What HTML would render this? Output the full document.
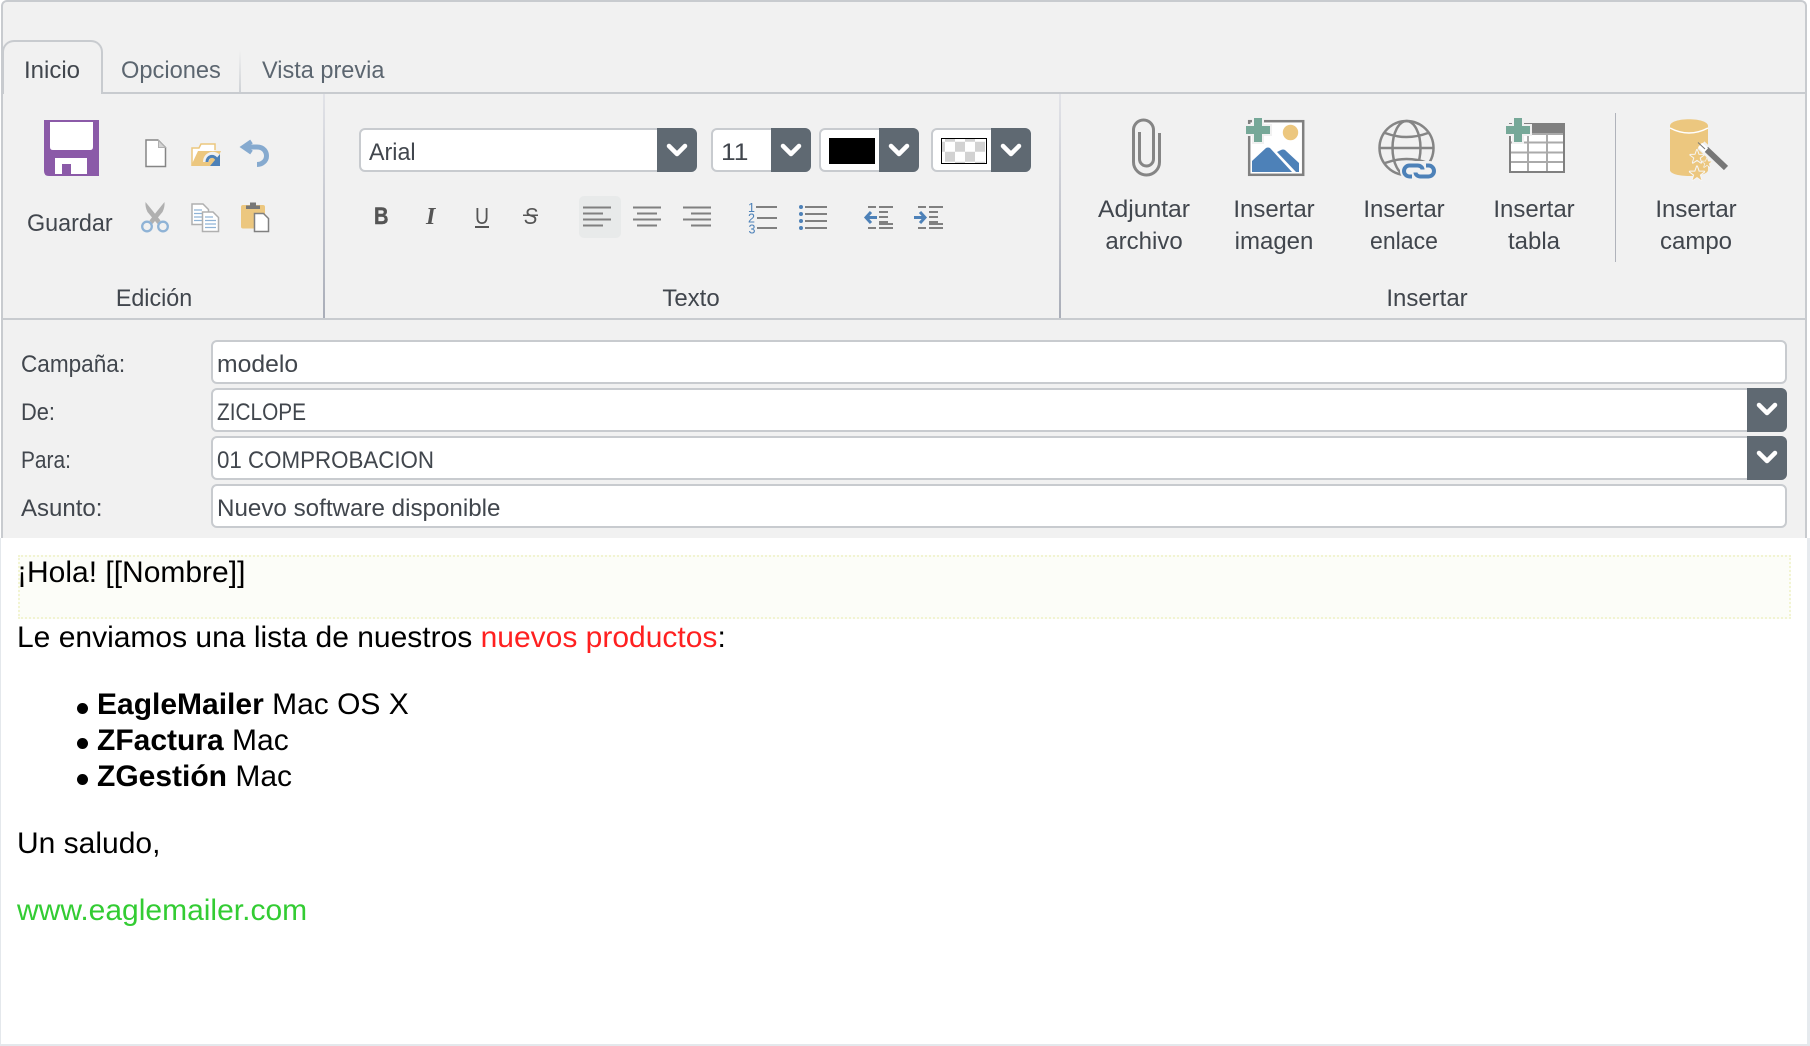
<!DOCTYPE html>
<html lang="es">
<head>
<meta charset="utf-8">
<title>Editor de campaña</title>
<style>
html,body{margin:0;padding:0;background:#fff;width:1810px;height:1046px;overflow:hidden}
body{position:relative;font-family:"Liberation Sans",Arial,sans-serif}
div{box-sizing:border-box}
.abs{position:absolute}
.frame{position:absolute;left:1px;top:0;width:1806px;height:538px;background:#f1f1f1;border:2px solid #c8cbcf;border-bottom:0;border-radius:6px 6px 0 0}
.t{position:absolute;white-space:nowrap;font-size:24px;line-height:30px;color:#41464d;transform-origin:0 50%}
.c{transform:translateX(-50%);transform-origin:50% 50%}
.m{color:#5c6670}
.tab{position:absolute;left:2px;top:40px;width:101px;height:54px;background:#f1f1f1;border:2px solid #c8cbcf;border-bottom:0;border-radius:12px 12px 0 0}
.h{position:absolute;height:2px;background:#c8cbcf}
.v{position:absolute;width:2px;background:linear-gradient(#e2e3e8,#a9adb8)}
.in{position:absolute;background:#fff;border:2px solid #c8cbcf;border-radius:6px;height:44px}
.btn{position:absolute;width:40px;height:44px;background:#5f6972;border-radius:0 6px 6px 0}
.ed{position:absolute;left:1px;top:538px;width:1806px;height:506px;background:#fff}
.y{position:absolute;left:18px;top:555px;width:1773px;height:64px;background:#fcfdf8;border:2px dotted #f2f4d2}
.p{position:absolute;white-space:nowrap;font-size:30px;line-height:36px;color:#000}
.d{position:absolute;left:76.500px;width:11px;height:11px;border-radius:50%;background:#000}
svg{position:absolute;left:0;top:0}
</style>
</head>
<body>
<div class="abs" style="left:0;top:538px;width:1px;height:508px;background:#e4e8ec"></div>
<div class="abs" style="left:1807px;top:538px;width:3px;height:508px;background:#e6eaee"></div>
<div class="abs" style="left:0;top:1044px;width:1810px;height:2px;background:#e4e8ec"></div>
<div class="frame"></div>

<div class="h" style="left:3px;top:92px;width:1802px"></div>
<div class="tab"></div>
<div class="abs" style="left:239px;top:50px;width:2px;height:42px;background:linear-gradient(#f1f1f1,#cfd2d6)"></div>
<div class="t" style="left:24px;top:56px">Inicio</div>
<div class="t m" style="left:121px;top:56px;transform:scaleX(.985)">Opciones</div>
<div class="t m" style="left:262px;top:56px;transform:scaleX(.98)">Vista previa</div>

<div class="v" style="left:323px;top:94px;height:224px"></div>
<div class="v" style="left:1059px;top:94px;height:224px"></div>
<div class="h" style="left:3px;top:318px;width:1802px"></div>
<div class="abs" style="left:1615px;top:113px;width:1px;height:149px;background:#b0b3bb"></div>

<div class="t" style="left:27px;top:209px;transform:scaleX(.973)">Guardar</div>
<div class="t c" style="left:154px;top:284px;transform:translateX(-50%) scaleX(.97)">Edición</div>
<div class="t c" style="left:691px;top:284px">Texto</div>
<div class="t c" style="left:1427px;top:284px">Insertar</div>
<div class="t c" style="left:1144px;top:195px;transform:translateX(-50%) scaleX(1.03)">Adjuntar</div>
<div class="t c" style="left:1144px;top:227px">archivo</div>
<div class="t c" style="left:1274px;top:195px">Insertar</div>
<div class="t c" style="left:1274px;top:227px">imagen</div>
<div class="t c" style="left:1404px;top:195px">Insertar</div>
<div class="t c" style="left:1404px;top:227px;transform:translateX(-50%) scaleX(.96)">enlace</div>
<div class="t c" style="left:1534px;top:195px">Insertar</div>
<div class="t c" style="left:1534px;top:227px">tabla</div>
<div class="t c" style="left:1696px;top:195px">Insertar</div>
<div class="t c" style="left:1696px;top:227px">campo</div>

<div class="in" style="left:359px;top:128px;width:338px"></div><div class="btn" style="left:657px;top:128px"></div>
<div class="t" style="left:369px;top:138px;transform:scaleX(.97)">Arial</div>
<div class="in" style="left:711px;top:128px;width:100px"></div><div class="btn" style="left:771px;top:128px"></div>
<div class="t" style="left:721px;top:138px;transform:scaleX(1.1)">11</div>
<div class="in" style="left:819px;top:128px;width:100px"></div><div class="btn" style="left:879px;top:128px"></div>
<div class="in" style="left:931px;top:128px;width:100px"></div><div class="btn" style="left:991px;top:128px"></div>
<div class="abs" style="left:829px;top:138px;width:46px;height:26px;background:#000"></div>
<div class="abs" style="left:579px;top:196px;width:42px;height:42px;background:#e8eaea;border-radius:5px"></div>

<div class="t" style="left:21px;top:350px;transform:scaleX(.94)">Campaña:</div>
<div class="t" style="left:21px;top:398px;transform:scaleX(.91)">De:</div>
<div class="t" style="left:21px;top:446px;transform:scaleX(.87)">Para:</div>
<div class="t" style="left:21px;top:494px">Asunto:</div>
<div class="in" style="left:211px;top:340px;width:1576px"></div>
<div class="in" style="left:211px;top:388px;width:1576px"></div><div class="btn" style="left:1747px;top:388px"></div>
<div class="in" style="left:211px;top:436px;width:1576px"></div><div class="btn" style="left:1747px;top:436px"></div>
<div class="in" style="left:211px;top:484px;width:1576px"></div>
<div class="t" style="left:217px;top:350px;transform:scaleX(1.03)">modelo</div>
<div class="t" style="left:217px;top:398px;transform:scaleX(.867)">ZICLOPE</div>
<div class="t" style="left:217px;top:446px;transform:scaleX(.93)">01 COMPROBACION</div>
<div class="t" style="left:217px;top:494px;transform:scaleX(1.007)">Nuevo software disponible</div>

<div class="ed"></div>
<div class="y"></div>
<div class="p" style="left:17px;top:555px">¡Hola! [[Nombre]]</div>
<div class="p" style="left:17px;top:620px">Le enviamos una lista de nuestros <span style="color:#ff2020">nuevos productos</span>:</div>
<div class="d" style="top:702.500px"></div>
<div class="d" style="top:738px"></div>
<div class="d" style="top:774px"></div>
<div class="p" style="left:97px;top:687px"><b>EagleMailer</b> Mac OS X</div>
<div class="p" style="left:97px;top:723px"><b>ZFactura</b> Mac</div>
<div class="p" style="left:97px;top:759px"><b>ZGestión</b> Mac</div>
<div class="p" style="left:17px;top:826px">Un saludo,</div>
<div class="p" style="left:17px;top:893px;color:#33cc33">www.eaglemailer.com</div>

<svg width="1810" height="1046" viewBox="0 0 1810 1046" xmlns="http://www.w3.org/2000/svg">
<!-- chevrons -->
<g fill="none" stroke="#fff" stroke-width="4.5" stroke-linecap="round" stroke-linejoin="round">
<path d="M669 146l8 8 8-8"/><path d="M783 146l8 8 8-8"/><path d="M891 146l8 8 8-8"/><path d="M1003 146l8 8 8-8"/>
<path d="M1759 405l8 8 8-8"/><path d="M1759 453l8 8 8-8"/>
</g>
<!-- checker swatch -->
<rect x="941.500" y="138.500" width="45" height="25" fill="#fff" stroke="#000"/>
<g fill="#d2d2d2">
<path d="M945 139h10v2.700h-10zM965 139h10v2.700h-10z"/>
<path d="M942 141.700h3v10h-3zM955 141.700h10v10h-10zM975 141.700h10v10h-10z"/>
<path d="M945 151.700h10v10h-10zM965 151.700h10v10h-10z"/>
<path d="M955 161.700h10v1.300h-10zM975 161.700h10v1.300h-10z"/>
</g>
<!-- save -->
<path d="M44 120H99V176H49Q44 176 44 171Z" fill="#8b5aa8"/>
<path d="M50 122H93V147Q93 150 90 150H53Q50 150 50 147Z" fill="#fff"/>
<path d="M55 158H87V174H71V164H62V174H55Z" fill="#fff"/>
<!-- new doc -->
<path d="M146 140H158L165.500 147.500V166.500H146Z" fill="#fff" stroke="#858585" stroke-width="1.500"/>
<path d="M158.500 140.500V147.500H165.500Z" fill="#d4d4d4" stroke="#b0b0b0"/>
<!-- open folder -->
<path d="M192 165V148H199L201 144H215V150" fill="#fff" stroke="#ecc77f" stroke-width="1.500"/>
<path d="M191 166L198 151H221L214 166Z" fill="#ecc77f"/>
<path d="M206 162C206 154 216 152 219 159" fill="none" stroke="#f1f1f1" stroke-width="6"/>
<path d="M207 162C207 156 214 154 217 160" fill="none" stroke="#4d81b8" stroke-width="3"/>
<path d="M220 154V166H210Z" fill="#4d81b8"/>
<!-- undo -->
<g fill="none" stroke="#86aacf" stroke-linejoin="miter">
<path d="M244 147H257C264 147 266.500 152 266.500 156C266.500 161 262 164.500 257 164.500" stroke-width="5"/>
<path d="M251.500 141.500L243.500 147L251.500 152.500" stroke-width="4.500"/>
</g>
<!-- cut -->
<path d="M145.500 202L160.500 220.500L157.500 224L147.500 212Q145 207 145.500 202Z" fill="#b0b0b0"/>
<path d="M164.500 202L149.500 220.500L152.500 224L162.500 212Q165 207 164.500 202Z" fill="#b0b0b0"/>
<circle cx="147" cy="226.500" r="4.800" fill="none" stroke="#8fb3d6" stroke-width="2.300"/>
<circle cx="163" cy="226.500" r="4.800" fill="none" stroke="#8fb3d6" stroke-width="2.300"/>
<!-- copy -->
<path d="M192 204H203L208.500 209.500V224.500H192Z" fill="#fff" stroke="#b0b0b0" stroke-width="1.500"/>
<path d="M194 210h8M194 213.500h10M194 217h10M194 220.500h10" stroke="#8fb3d6" stroke-width="1.200"/>
<path d="M202.500 212H213L218.500 217.500V231.500H202.500Z" fill="#fff" stroke="#b0b0b0" stroke-width="1.500"/>
<path d="M205 217h8M205 220.500h11M205 224h11M205 227.500h11" stroke="#8fb3d6" stroke-width="1.200"/>
<!-- paste -->
<rect x="241" y="205" width="24" height="23.500" rx="2" fill="#ecc77f"/>
<path d="M246 209V205.500H250V202.500H256V205.500H260V209Z" fill="#777"/>
<path d="M254.500 213.500H263.500L268.500 218.500V231.500H254.500Z" fill="#fff" stroke="#808080" stroke-width="1.500"/>
<!-- format -->
<g fill="#555">
<text x="374" y="224" font-size="24" font-weight="700" font-family="Liberation Sans, sans-serif" textLength="14.500" lengthAdjust="spacingAndGlyphs" stroke="#555" stroke-width=".4">B</text>
<text x="426" y="224" font-size="24" font-style="italic" font-weight="700" font-family="Liberation Serif, serif">I</text>
<text x="475" y="224" font-size="23" font-family="Liberation Sans, sans-serif" textLength="14" lengthAdjust="spacingAndGlyphs">U</text>
<text x="524" y="224" font-size="23" font-style="italic" font-family="Liberation Sans, sans-serif" textLength="13.500" lengthAdjust="spacingAndGlyphs">S</text>
<rect x="475" y="226" width="14" height="2"/>
<rect x="523" y="214.500" width="15" height="1.500"/>
</g>
<!-- align + lists -->
<g stroke="#808080" stroke-width="2" fill="none">
<path d="M583 207.500h28M583 213.500h20M583 219.500h28M583 225.500h20"/>
<path d="M633 207.500h28M637 213.500h20M633 219.500h28M637 225.500h20"/>
<path d="M683 207.500h28M691 213.500h20M683 219.500h28M691 225.500h20"/>
<path d="M756 207h21M757 218h20M757 228h20"/>
<path d="M805 207h22M805 214h22M805 221h22M805 228h22"/>
<path d="M868 207h8M879 207h14M879 212h9M879 217h9M879 222h9M879 224h14M868 228h8M879 228h14" />
<path d="M918 207h8M929 207h14M929 212h9M929 217h9M929 222h9M929 224h14M918 228h8M929 228h14"/>
</g>
<g fill="#4d81b8" font-family="Liberation Sans, sans-serif" font-size="12.500">
<text x="748" y="212">1</text><text x="748" y="222.500">2</text><text x="748.500" y="233.500">3</text>
<circle cx="801" cy="207" r="2"/><circle cx="801" cy="214" r="2"/><circle cx="801" cy="221" r="2"/><circle cx="801" cy="228" r="2"/>
</g>
<g fill="none" stroke="#4d81b8" stroke-width="3">
<path d="M866 217.500h11M871 212l-5 5.500 5 5.500"/>
<path d="M914 217.500h11M920 212l5 5.500-5 5.500"/>
</g>
<!-- paperclip -->
<path d="M1159.500 133V162A13 13 0 0 1 1133.500 162V130A10 10 0 0 1 1153.500 130V159A7 7 0 0 1 1139.500 159V132" fill="none" stroke="#858585" stroke-width="3"/>
<!-- image -->
<rect x="1249.200" y="121.200" width="54" height="53.600" fill="#fff" stroke="#808080" stroke-width="2.500"/>
<circle cx="1290.500" cy="132.500" r="7.700" fill="#ecc77f"/>
<path d="M1252 172V161L1266 148Q1268 147 1270 148L1292 172Z" fill="#4d81b8"/>
<path d="M1296 172L1277 152L1281 150Q1283 149 1285 150L1299 163V172Z" fill="#4d81b8"/>
<path d="M1254 118H1262V126H1270V134H1262V142H1254V134H1246V126H1254Z" fill="#76a898" stroke="#f1f1f1" stroke-width="4" paint-order="stroke"/>
<!-- globe -->
<g fill="none" stroke="#858585" stroke-width="2.500">
<circle cx="1406.500" cy="148" r="27"/>
<ellipse cx="1406.500" cy="148" rx="14" ry="27"/>
<path d="M1380 148H1433M1385 133Q1406.500 141 1428 133M1385 163Q1406.500 155 1428 163"/>
</g>
<rect x="1400" y="161" width="38" height="19" rx="9" fill="#f1f1f1"/>
<g fill="none" stroke="#4d81b8" stroke-width="4">
<path d="M1412 176.500h-2.500a5.500 5.500 0 0 1 0-11h8c3 0 5 2 5 4"/>
<path d="M1426 165.500h2.500a5.500 5.500 0 0 1 0 11h-8c-3 0-5-2-5-4"/>
</g>
<!-- table -->
<rect x="1509" y="123" width="56" height="50" fill="#808080"/>
<path d="M1511 133H1563V171H1511Z" fill="#fff"/>
<path d="M1511 142.500h52M1511 152.500h52M1511 162h52M1528 133v38M1547 133v38M1511 134h52" stroke="#aaa" stroke-width="2" fill="none"/>
<path d="M1514 118H1522V126H1530V134H1522V142H1514V134H1506V126H1514Z" fill="#76a898" stroke="#f1f1f1" stroke-width="4" paint-order="stroke"/>
<!-- field wand -->
<path d="M1670 126C1670 117 1708 117 1708 126V170C1708 178 1670 178 1670 170Z" fill="#ecc77f"/>
<path d="M1670 128Q1689 138 1708 128" fill="none" stroke="#fff" stroke-width="1.500"/>
<g fill="#ecc77f" stroke="#f6f6f6" stroke-width=".28" paint-order="stroke" stroke-linejoin="round">
<polygon transform="translate(1697 157) scale(7)" points="0,-1 .235,-.324 .951,-.309 .38,.124 .588,.809 0,.4 -.588,.809 -.38,.124 -.951,-.309 -.235,-.324"/>
<polygon transform="translate(1707 163) scale(5)" points="0,-1 .235,-.324 .951,-.309 .38,.124 .588,.809 0,.4 -.588,.809 -.38,.124 -.951,-.309 -.235,-.324"/>
<polygon transform="translate(1697 174) scale(7.500)" points="0,-1 .235,-.324 .951,-.309 .38,.124 .588,.809 0,.4 -.588,.809 -.38,.124 -.951,-.309 -.235,-.324"/>
</g>
<path d="M1701 145L1726 169" stroke="#f1f1f1" stroke-width="10"/>
<path d="M1706 149L1726 168" stroke="#777" stroke-width="6"/>
<path d="M1700 145L1706 150.500" stroke="#fff" stroke-width="6"/>
<path d="M1698 142.500L1705 149" stroke="#777" stroke-width="1"/>
</svg>
</body>
</html>
